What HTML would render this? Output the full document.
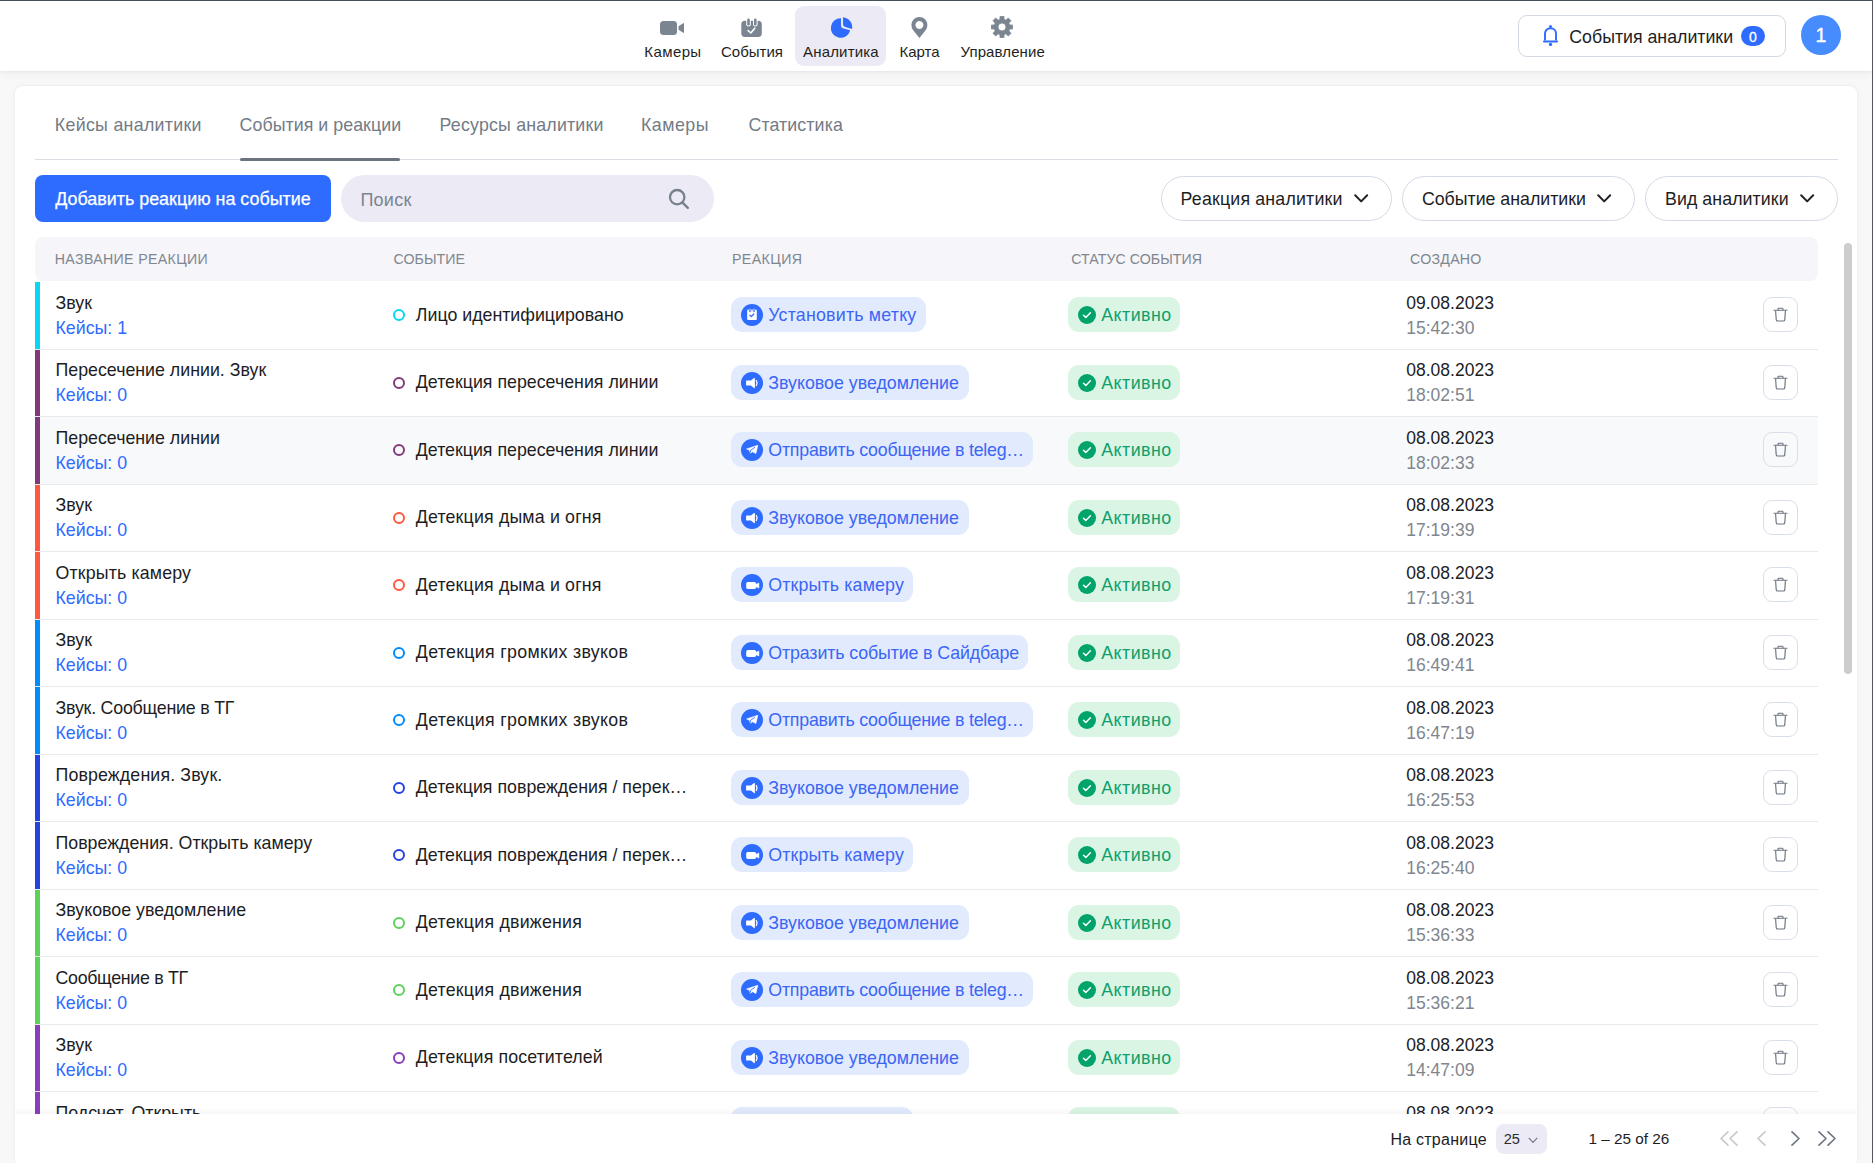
<!DOCTYPE html>
<html><head><meta charset="utf-8"><title>Analytics</title>
<style>
*{box-sizing:border-box;margin:0;padding:0}
html,body{width:1873px;height:1163px;overflow:hidden;background:#f6f6f7}
body{font-family:"Liberation Sans", sans-serif;position:relative}
</style></head><body>
<div style="position:absolute;left:0px;top:0px;width:1873px;height:1163px;background:#f8f8f8"></div>
<div style="position:absolute;left:15px;top:86px;width:1842px;height:1080px;background:#fff;border-radius:7px;box-shadow:0 0 1.5px rgba(0,0,0,0.10),0 0 8px rgba(0,0,0,0.035)"></div>
<div style="position:absolute;left:0px;top:0px;width:1873px;height:71px;background:#fff;box-shadow:0 1px 3px rgba(0,0,0,0.06),0 3px 10px rgba(0,0,0,0.035)"></div>
<div style="position:absolute;left:795px;top:6px;width:91px;height:60px;background:#ecebf5;border-radius:9px"></div>
<svg style="position:absolute;left:659px;top:20px;" width="26" height="16" viewBox="0 0 26 16"><rect x="1" y="1" width="17" height="14" rx="3.5" fill="#7b8591"/><path d="M19.5 6.2 L24.2 3.2 Q25 2.8 25 3.7 L25 12.3 Q25 13.2 24.2 12.8 L19.5 9.8 Z" fill="#7b8591"/></svg>
<svg style="position:absolute;left:740px;top:17px;" width="23" height="21" viewBox="0 0 23 21"><rect x="1.3" y="3.8" width="20.5" height="16.1" rx="3.6" fill="#7b8591"/><rect x="6.2" y="0.4" width="4.6" height="9.2" rx="2.3" fill="#fff"/><rect x="13" y="0.4" width="4.6" height="9.2" rx="2.3" fill="#fff"/><rect x="7.2" y="1.5" width="2.6" height="7" rx="1.3" fill="#7b8591"/><rect x="14" y="1.5" width="2.6" height="7" rx="1.3" fill="#7b8591"/><path d="M8 13.5 L10.8 16 L14.8 11.2" fill="none" stroke="#fff" stroke-width="1.6" stroke-linecap="round" stroke-linejoin="round"/></svg>
<svg style="position:absolute;left:831px;top:16px;" width="23" height="23" viewBox="0 0 23 23"><path d="M10 2.2 L10 9.8 Q10 11.6 11.8 12.2 L19.2 14.3 A9.8 9.8 0 1 1 10 2.2 Z" fill="#2e6bff"/><path d="M12 1.2 A10 10 0 0 1 21 12.9 L14.2 11 Q12 10.4 12 8.6 Z" fill="#2e6bff"/></svg>
<svg style="position:absolute;left:911px;top:16px;" width="17" height="23" viewBox="0 0 17 23"><path d="M8.4 1 A8 8 0 0 1 16.4 9 Q16.4 11.5 14.8 14 L8.4 22 L2 14 Q0.4 11.5 0.4 9 A8 8 0 0 1 8.4 1 Z M8.4 5 A4 4 0 1 0 8.41 5 Z" fill="#7b8591" fill-rule="evenodd"/></svg>
<svg style="position:absolute;left:991px;top:16px;" width="22" height="22" viewBox="0 0 22 22"><path d="M8.89 3.39 L9.14 0.16 L12.86 0.16 L13.11 3.39 L14.89 4.13 L17.35 2.02 L19.98 4.65 L17.87 7.11 L18.61 8.89 L21.84 9.14 L21.84 12.86 L18.61 13.11 L17.87 14.89 L19.98 17.35 L17.35 19.98 L14.89 17.87 L13.11 18.61 L12.86 21.84 L9.14 21.84 L8.89 18.61 L7.11 17.87 L4.65 19.98 L2.02 17.35 L4.13 14.89 L3.39 13.11 L0.16 12.86 L0.16 9.14 L3.39 8.89 L4.13 7.11 L2.02 4.65 L4.65 2.02 L7.11 4.13 Z M11 7 A4 4 0 1 0 11.01 7 Z" fill="#7b8591" fill-rule="evenodd" stroke="#7b8591" stroke-width="0.8" stroke-linejoin="round"/></svg>
<div style="position:absolute;left:644.30px;top:43.50px;font-size:15px;line-height:15px;color:#1f1f23;white-space:nowrap;letter-spacing:0.4px">Камеры</div>
<div style="position:absolute;left:721.00px;top:43.50px;font-size:15px;line-height:15px;color:#1f1f23;white-space:nowrap;letter-spacing:0.0px">События</div>
<div style="position:absolute;left:803.00px;top:43.50px;font-size:15px;line-height:15px;color:#1f1f23;white-space:nowrap;letter-spacing:0.18px">Аналитика</div>
<div style="position:absolute;left:899.50px;top:43.50px;font-size:15px;line-height:15px;color:#1f1f23;white-space:nowrap;letter-spacing:0.0px">Карта</div>
<div style="position:absolute;left:960.50px;top:43.50px;font-size:15px;line-height:15px;color:#1f1f23;white-space:nowrap;letter-spacing:0.1px">Управление</div>
<div style="position:absolute;left:1518px;top:15px;width:268px;height:42px;border:1px solid #d3d9e3;border-radius:9px;box-sizing:border-box"></div>
<svg style="position:absolute;left:1541px;top:25px;" width="19" height="22" viewBox="0 0 19 22"><path d="M4 15.6 L4 8.6 C4 5.5 6.4 3.3 9.5 3.3 C12.6 3.3 15 5.5 15 8.6 L15 15.6" fill="none" stroke="#2e6bff" stroke-width="1.9"/><path d="M2.9 16.5 L16.1 16.5" stroke="#2e6bff" stroke-width="1.9" stroke-linecap="round"/><circle cx="9.5" cy="1.6" r="1.5" fill="#2e6bff"/><circle cx="9.5" cy="19.4" r="1.7" fill="#2e6bff"/></svg>
<div style="position:absolute;left:1569.30px;top:28.67px;font-size:17.75px;line-height:17.75px;color:#1d1d1f;white-space:nowrap;">События аналитики</div>
<div style="position:absolute;left:1741px;top:26px;width:24px;height:20px;background:#2e6bff;border-radius:10px"></div>
<div style="position:absolute;left:1749.00px;top:29.55px;font-size:14px;line-height:14px;color:#fff;white-space:nowrap;-webkit-text-stroke:0.3px #fff">0</div>
<div style="position:absolute;left:1801px;top:15px;width:40px;height:40px;background:#468cff;border-radius:50%"></div>
<div style="position:absolute;left:1815.50px;top:26.39px;font-size:19.5px;line-height:19.5px;color:#fff;white-space:nowrap;-webkit-text-stroke:0.35px #fff">1</div>
<div style="position:absolute;left:54.80px;top:116.53px;font-size:17.8px;line-height:17.8px;color:#737b86;white-space:nowrap;letter-spacing:0.3px">Кейсы аналитики</div>
<div style="position:absolute;left:239.60px;top:116.53px;font-size:17.8px;line-height:17.8px;color:#737b86;white-space:nowrap;letter-spacing:0.05px">События и реакции</div>
<div style="position:absolute;left:439.60px;top:116.53px;font-size:17.8px;line-height:17.8px;color:#737b86;white-space:nowrap;letter-spacing:0.19px">Ресурсы аналитики</div>
<div style="position:absolute;left:641.00px;top:116.53px;font-size:17.8px;line-height:17.8px;color:#737b86;white-space:nowrap;letter-spacing:0.5px">Камеры</div>
<div style="position:absolute;left:748.50px;top:116.53px;font-size:17.8px;line-height:17.8px;color:#737b86;white-space:nowrap;letter-spacing:0.1px">Статистика</div>
<div style="position:absolute;left:35px;top:159px;width:1803px;height:1px;background:#d9dee5"></div>
<div style="position:absolute;left:240px;top:158px;width:160px;height:3px;background:#6b7480;border-radius:2px"></div>
<div style="position:absolute;left:35px;top:175px;width:296px;height:47px;background:#2e6bff;border-radius:8px"></div>
<div style="position:absolute;left:55.20px;top:190.85px;font-size:17.9px;line-height:17.9px;color:#fff;white-space:nowrap;-webkit-text-stroke:0.25px #fff">Добавить реакцию на событие</div>
<div style="position:absolute;left:341px;top:175px;width:373px;height:47px;background:#ecebf5;border-radius:24px"></div>
<div style="position:absolute;left:360.40px;top:190.66px;font-size:18px;line-height:18px;color:#7b8490;white-space:nowrap;letter-spacing:0.25px">Поиск</div>
<svg style="position:absolute;left:668px;top:188px;" width="22" height="22" viewBox="0 0 22 22"><circle cx="9.2" cy="9.2" r="7.2" fill="none" stroke="#77818b" stroke-width="2.3"/><path d="M14.6 14.6 L19.8 19.8" stroke="#77818b" stroke-width="2.4" stroke-linecap="round"/></svg>
<div style="position:absolute;left:1161px;top:176px;width:231px;height:45px;border:1px solid #d5dbe5;border-radius:23px"></div>
<div style="position:absolute;left:1180.60px;top:191.17px;font-size:17.75px;line-height:17.75px;color:#1d1d1f;white-space:nowrap;letter-spacing:0.19px">Реакция аналитики</div>
<svg style="position:absolute;left:1353.9px;top:194px;overflow:visible" width="14.4" height="9" viewBox="0 0 14.4 9"><path d="M1.2 1.2 L7.2 7.4 L13.2 1.2" fill="none" stroke="#1f2328" stroke-width="2" stroke-linecap="round" stroke-linejoin="round"/></svg>
<div style="position:absolute;left:1402px;top:176px;width:233px;height:45px;border:1px solid #d5dbe5;border-radius:23px"></div>
<div style="position:absolute;left:1421.90px;top:191.17px;font-size:17.75px;line-height:17.75px;color:#1d1d1f;white-space:nowrap;">Событие аналитики</div>
<svg style="position:absolute;left:1596.8px;top:194px;overflow:visible" width="14.4" height="9" viewBox="0 0 14.4 9"><path d="M1.2 1.2 L7.2 7.4 L13.2 1.2" fill="none" stroke="#1f2328" stroke-width="2" stroke-linecap="round" stroke-linejoin="round"/></svg>
<div style="position:absolute;left:1645px;top:176px;width:193px;height:45px;border:1px solid #d5dbe5;border-radius:23px"></div>
<div style="position:absolute;left:1665.00px;top:191.17px;font-size:17.75px;line-height:17.75px;color:#1d1d1f;white-space:nowrap;letter-spacing:0.08px">Вид аналитики</div>
<svg style="position:absolute;left:1799.9px;top:194px;overflow:visible" width="14.4" height="9" viewBox="0 0 14.4 9"><path d="M1.2 1.2 L7.2 7.4 L13.2 1.2" fill="none" stroke="#1f2328" stroke-width="2" stroke-linecap="round" stroke-linejoin="round"/></svg>
<div style="position:absolute;left:0;top:0;width:1873px;height:1114px;overflow:hidden">
<div style="position:absolute;left:35px;top:237px;width:1783px;height:44px;background:#f6f5fa;border-radius:8px"></div>
<div style="position:absolute;left:54.80px;top:251.88px;font-size:14.2px;line-height:14.2px;color:#80868e;white-space:nowrap;letter-spacing:0.33px">НАЗВАНИЕ РЕАКЦИИ</div>
<div style="position:absolute;left:393.60px;top:251.88px;font-size:14.2px;line-height:14.2px;color:#80868e;white-space:nowrap;letter-spacing:0.02px">СОБЫТИЕ</div>
<div style="position:absolute;left:732.00px;top:251.88px;font-size:14.2px;line-height:14.2px;color:#80868e;white-space:nowrap;letter-spacing:0.4px">РЕАКЦИЯ</div>
<div style="position:absolute;left:1071.20px;top:251.88px;font-size:14.2px;line-height:14.2px;color:#80868e;white-space:nowrap;letter-spacing:0.05px">СТАТУС СОБЫТИЯ</div>
<div style="position:absolute;left:1410.00px;top:251.88px;font-size:14.2px;line-height:14.2px;color:#80868e;white-space:nowrap;letter-spacing:0.25px">СОЗДАНО</div>
<div style="position:absolute;left:35px;top:348.5px;width:1783px;height:1.0px;background:#e9e9f0"></div>
<div style="position:absolute;left:35px;top:282.0px;width:5px;height:66.5px;background:#08d6f4"></div>
<div style="position:absolute;left:55.50px;top:294.73px;font-size:17.8px;line-height:17.8px;color:#1d1d1f;white-space:nowrap;">Звук</div>
<div style="position:absolute;left:55.50px;top:319.53px;font-size:17.8px;line-height:17.8px;color:#2e6bff;white-space:nowrap;">Кейсы: 1</div>
<div style="position:absolute;left:393px;top:309.0px;width:12px;height:12.0px;border:2px solid #08d6f4;border-radius:50%"></div>
<div style="position:absolute;left:415.80px;top:306.93px;font-size:17.8px;line-height:17.8px;color:#1d1d1f;white-space:nowrap;">Лицо идентифицировано</div>
<div style="position:absolute;left:731px;top:297.0px;width:194.60000000000002px;height:35.0px;background:#e2eafd;border-radius:11px"></div>
<svg style="position:absolute;left:741px;top:304.0px;" width="22" height="22" viewBox="0 0 22 22"><circle cx="11" cy="11" r="11" fill="#2e6bff"/><path d="M6.2 6.8 Q6.2 5.6 7.2 5.6 L8.3 5.6 L9.2 7.3 L10.1 5.6 L11.9 5.6 L12.8 7.3 L13.7 5.6 L14.8 5.6 Q15.8 5.6 15.8 6.8 L15.8 15.2 Q15.8 16 15 16 L7 16 Q6.2 16 6.2 15.2 Z" fill="#fff"/><rect x="8.3" y="4.6" width="1.6" height="3.2" rx="0.8" fill="#fff" stroke="#2e6bff" stroke-width="0.8"/><rect x="12.1" y="4.6" width="1.6" height="3.2" rx="0.8" fill="#fff" stroke="#2e6bff" stroke-width="0.8"/><path d="M8.9 11.3 L10.3 12.6 L12.8 10" fill="none" stroke="#2e6bff" stroke-width="1.3" stroke-linecap="round" stroke-linejoin="round"/></svg>
<div style="position:absolute;left:768.30px;top:307.23px;font-size:17.8px;line-height:17.8px;color:#3a66f5;white-space:nowrap;letter-spacing:0.21px">Установить метку</div>
<div style="position:absolute;left:1068px;top:297.0px;width:112px;height:35.0px;background:#daf5e4;border-radius:11px"></div>
<svg style="position:absolute;left:1078px;top:306.0px;" width="18" height="18" viewBox="0 0 18 18"><circle cx="9" cy="9" r="9" fill="#00a369"/><path d="M5.5 9.3 L7.8 11.4 L12.4 6.7" fill="none" stroke="#fff" stroke-width="1.5" stroke-linecap="round" stroke-linejoin="round"/></svg>
<div style="position:absolute;left:1101.20px;top:307.23px;font-size:17.8px;line-height:17.8px;color:#0e9f6c;white-space:nowrap;letter-spacing:0.5px">Активно</div>
<div style="position:absolute;left:1406.30px;top:294.69px;font-size:17.5px;line-height:17.5px;color:#1d1d1f;white-space:nowrap;">09.08.2023</div>
<div style="position:absolute;left:1406.30px;top:319.69px;font-size:17.5px;line-height:17.5px;color:#80868e;white-space:nowrap;">15:42:30</div>
<div style="position:absolute;left:1763px;top:297.0px;width:35px;height:35.0px;border:1px solid #d9dfe8;border-radius:9px"></div>
<svg style="position:absolute;left:1773px;top:307.0px;" width="15" height="15" viewBox="0 0 15 15"><path d="M1 3.3 L14 3.3" stroke="#6b7480" stroke-width="1.1" stroke-linecap="round"/><path d="M5 3.2 L5 1.9 Q5 1.2 5.7 1.2 L9.3 1.2 Q10 1.2 10 1.9 L10 3.2" fill="none" stroke="#6b7480" stroke-width="1.05"/><path d="M2.6 3.6 L3.2 12.6 Q3.3 14 4.7 14 L10.3 14 Q11.7 14 11.8 12.6 L12.4 3.6" fill="none" stroke="#6b7480" stroke-width="1.15"/></svg>
<div style="position:absolute;left:35px;top:416.0px;width:1783px;height:1.0px;background:#e9e9f0"></div>
<div style="position:absolute;left:35px;top:349.5px;width:5px;height:66.5px;background:#803a7a"></div>
<div style="position:absolute;left:55.50px;top:362.23px;font-size:17.8px;line-height:17.8px;color:#1d1d1f;white-space:nowrap;">Пересечение линии. Звук</div>
<div style="position:absolute;left:55.50px;top:387.03px;font-size:17.8px;line-height:17.8px;color:#2e6bff;white-space:nowrap;">Кейсы: 0</div>
<div style="position:absolute;left:393px;top:376.5px;width:12px;height:12.0px;border:2px solid #803a7a;border-radius:50%"></div>
<div style="position:absolute;left:415.80px;top:374.43px;font-size:17.8px;line-height:17.8px;color:#1d1d1f;white-space:nowrap;">Детекция пересечения линии</div>
<div style="position:absolute;left:731px;top:364.5px;width:237.79999999999995px;height:35.0px;background:#e2eafd;border-radius:11px"></div>
<svg style="position:absolute;left:741px;top:371.5px;" width="22" height="22" viewBox="0 0 22 22"><circle cx="11" cy="11" r="11" fill="#2e6bff"/><path d="M5.4 8.5 L9.9 8.5 L13 6.1 Q13.9 5.5 13.9 6.5 L13.9 15.5 Q13.9 16.5 13 15.9 L9.9 13.5 L5.4 13.5 Q5.1 13.5 5.1 13.1 L5.1 8.9 Q5.1 8.5 5.4 8.5 Z" fill="#fff"/><path d="M15.3 8.6 Q16.9 11 15.3 13.5" fill="none" stroke="#fff" stroke-width="1.3" stroke-linecap="round"/></svg>
<div style="position:absolute;left:768.30px;top:374.73px;font-size:17.8px;line-height:17.8px;color:#3a66f5;white-space:nowrap;">Звуковое уведомление</div>
<div style="position:absolute;left:1068px;top:364.5px;width:112px;height:35.0px;background:#daf5e4;border-radius:11px"></div>
<svg style="position:absolute;left:1078px;top:373.5px;" width="18" height="18" viewBox="0 0 18 18"><circle cx="9" cy="9" r="9" fill="#00a369"/><path d="M5.5 9.3 L7.8 11.4 L12.4 6.7" fill="none" stroke="#fff" stroke-width="1.5" stroke-linecap="round" stroke-linejoin="round"/></svg>
<div style="position:absolute;left:1101.20px;top:374.73px;font-size:17.8px;line-height:17.8px;color:#0e9f6c;white-space:nowrap;letter-spacing:0.5px">Активно</div>
<div style="position:absolute;left:1406.30px;top:362.19px;font-size:17.5px;line-height:17.5px;color:#1d1d1f;white-space:nowrap;">08.08.2023</div>
<div style="position:absolute;left:1406.30px;top:387.19px;font-size:17.5px;line-height:17.5px;color:#80868e;white-space:nowrap;">18:02:51</div>
<div style="position:absolute;left:1763px;top:364.5px;width:35px;height:35.0px;border:1px solid #d9dfe8;border-radius:9px"></div>
<svg style="position:absolute;left:1773px;top:374.5px;" width="15" height="15" viewBox="0 0 15 15"><path d="M1 3.3 L14 3.3" stroke="#6b7480" stroke-width="1.1" stroke-linecap="round"/><path d="M5 3.2 L5 1.9 Q5 1.2 5.7 1.2 L9.3 1.2 Q10 1.2 10 1.9 L10 3.2" fill="none" stroke="#6b7480" stroke-width="1.05"/><path d="M2.6 3.6 L3.2 12.6 Q3.3 14 4.7 14 L10.3 14 Q11.7 14 11.8 12.6 L12.4 3.6" fill="none" stroke="#6b7480" stroke-width="1.15"/></svg>
<div style="position:absolute;left:35px;top:417.0px;width:1783px;height:67.5px;background:#f8f9fb"></div>
<div style="position:absolute;left:35px;top:483.5px;width:1783px;height:1.0px;background:#e9e9f0"></div>
<div style="position:absolute;left:35px;top:417.0px;width:5px;height:66.5px;background:#803a7a"></div>
<div style="position:absolute;left:55.50px;top:429.73px;font-size:17.8px;line-height:17.8px;color:#1d1d1f;white-space:nowrap;">Пересечение линии</div>
<div style="position:absolute;left:55.50px;top:454.53px;font-size:17.8px;line-height:17.8px;color:#2e6bff;white-space:nowrap;">Кейсы: 0</div>
<div style="position:absolute;left:393px;top:444.0px;width:12px;height:12.0px;border:2px solid #803a7a;border-radius:50%"></div>
<div style="position:absolute;left:415.80px;top:441.93px;font-size:17.8px;line-height:17.8px;color:#1d1d1f;white-space:nowrap;">Детекция пересечения линии</div>
<div style="position:absolute;left:731px;top:432.0px;width:301.9000000000001px;height:35.0px;background:#e2eafd;border-radius:11px"></div>
<svg style="position:absolute;left:741px;top:439.0px;" width="22" height="22" viewBox="0 0 22 22"><circle cx="11" cy="11" r="11" fill="#2e6bff"/><path d="M5.6 9.9 L16.8 6.3 L14.9 14.5 L11.6 12.8 L9.4 14.2 L8.4 11.3 Z" fill="#fff" stroke="#fff" stroke-width="0.6" stroke-linejoin="round"/><path d="M9.4 13.2 L9.6 11.3 L13.6 8.5" fill="none" stroke="#2e6bff" stroke-width="0.9" stroke-linecap="round"/></svg>
<div style="position:absolute;left:768.30px;top:442.23px;font-size:17.8px;line-height:17.8px;color:#3a66f5;white-space:nowrap;letter-spacing:-0.22px">Отправить сообщение в teleg…</div>
<div style="position:absolute;left:1068px;top:432.0px;width:112px;height:35.0px;background:#daf5e4;border-radius:11px"></div>
<svg style="position:absolute;left:1078px;top:441.0px;" width="18" height="18" viewBox="0 0 18 18"><circle cx="9" cy="9" r="9" fill="#00a369"/><path d="M5.5 9.3 L7.8 11.4 L12.4 6.7" fill="none" stroke="#fff" stroke-width="1.5" stroke-linecap="round" stroke-linejoin="round"/></svg>
<div style="position:absolute;left:1101.20px;top:442.23px;font-size:17.8px;line-height:17.8px;color:#0e9f6c;white-space:nowrap;letter-spacing:0.5px">Активно</div>
<div style="position:absolute;left:1406.30px;top:429.69px;font-size:17.5px;line-height:17.5px;color:#1d1d1f;white-space:nowrap;">08.08.2023</div>
<div style="position:absolute;left:1406.30px;top:454.69px;font-size:17.5px;line-height:17.5px;color:#80868e;white-space:nowrap;">18:02:33</div>
<div style="position:absolute;left:1763px;top:432.0px;width:35px;height:35.0px;border:1px solid #d9dfe8;border-radius:9px"></div>
<svg style="position:absolute;left:1773px;top:442.0px;" width="15" height="15" viewBox="0 0 15 15"><path d="M1 3.3 L14 3.3" stroke="#6b7480" stroke-width="1.1" stroke-linecap="round"/><path d="M5 3.2 L5 1.9 Q5 1.2 5.7 1.2 L9.3 1.2 Q10 1.2 10 1.9 L10 3.2" fill="none" stroke="#6b7480" stroke-width="1.05"/><path d="M2.6 3.6 L3.2 12.6 Q3.3 14 4.7 14 L10.3 14 Q11.7 14 11.8 12.6 L12.4 3.6" fill="none" stroke="#6b7480" stroke-width="1.15"/></svg>
<div style="position:absolute;left:35px;top:551.0px;width:1783px;height:1.0px;background:#e9e9f0"></div>
<div style="position:absolute;left:35px;top:484.5px;width:5px;height:66.5px;background:#ff583f"></div>
<div style="position:absolute;left:55.50px;top:497.23px;font-size:17.8px;line-height:17.8px;color:#1d1d1f;white-space:nowrap;">Звук</div>
<div style="position:absolute;left:55.50px;top:522.03px;font-size:17.8px;line-height:17.8px;color:#2e6bff;white-space:nowrap;">Кейсы: 0</div>
<div style="position:absolute;left:393px;top:511.5px;width:12px;height:12.0px;border:2px solid #ff583f;border-radius:50%"></div>
<div style="position:absolute;left:415.80px;top:509.43px;font-size:17.8px;line-height:17.8px;color:#1d1d1f;white-space:nowrap;letter-spacing:0.16px">Детекция дыма и огня</div>
<div style="position:absolute;left:731px;top:499.5px;width:237.79999999999995px;height:35.0px;background:#e2eafd;border-radius:11px"></div>
<svg style="position:absolute;left:741px;top:506.5px;" width="22" height="22" viewBox="0 0 22 22"><circle cx="11" cy="11" r="11" fill="#2e6bff"/><path d="M5.4 8.5 L9.9 8.5 L13 6.1 Q13.9 5.5 13.9 6.5 L13.9 15.5 Q13.9 16.5 13 15.9 L9.9 13.5 L5.4 13.5 Q5.1 13.5 5.1 13.1 L5.1 8.9 Q5.1 8.5 5.4 8.5 Z" fill="#fff"/><path d="M15.3 8.6 Q16.9 11 15.3 13.5" fill="none" stroke="#fff" stroke-width="1.3" stroke-linecap="round"/></svg>
<div style="position:absolute;left:768.30px;top:509.73px;font-size:17.8px;line-height:17.8px;color:#3a66f5;white-space:nowrap;">Звуковое уведомление</div>
<div style="position:absolute;left:1068px;top:499.5px;width:112px;height:35.0px;background:#daf5e4;border-radius:11px"></div>
<svg style="position:absolute;left:1078px;top:508.5px;" width="18" height="18" viewBox="0 0 18 18"><circle cx="9" cy="9" r="9" fill="#00a369"/><path d="M5.5 9.3 L7.8 11.4 L12.4 6.7" fill="none" stroke="#fff" stroke-width="1.5" stroke-linecap="round" stroke-linejoin="round"/></svg>
<div style="position:absolute;left:1101.20px;top:509.73px;font-size:17.8px;line-height:17.8px;color:#0e9f6c;white-space:nowrap;letter-spacing:0.5px">Активно</div>
<div style="position:absolute;left:1406.30px;top:497.19px;font-size:17.5px;line-height:17.5px;color:#1d1d1f;white-space:nowrap;">08.08.2023</div>
<div style="position:absolute;left:1406.30px;top:522.19px;font-size:17.5px;line-height:17.5px;color:#80868e;white-space:nowrap;">17:19:39</div>
<div style="position:absolute;left:1763px;top:499.5px;width:35px;height:35.0px;border:1px solid #d9dfe8;border-radius:9px"></div>
<svg style="position:absolute;left:1773px;top:509.5px;" width="15" height="15" viewBox="0 0 15 15"><path d="M1 3.3 L14 3.3" stroke="#6b7480" stroke-width="1.1" stroke-linecap="round"/><path d="M5 3.2 L5 1.9 Q5 1.2 5.7 1.2 L9.3 1.2 Q10 1.2 10 1.9 L10 3.2" fill="none" stroke="#6b7480" stroke-width="1.05"/><path d="M2.6 3.6 L3.2 12.6 Q3.3 14 4.7 14 L10.3 14 Q11.7 14 11.8 12.6 L12.4 3.6" fill="none" stroke="#6b7480" stroke-width="1.15"/></svg>
<div style="position:absolute;left:35px;top:618.5px;width:1783px;height:1.0px;background:#e9e9f0"></div>
<div style="position:absolute;left:35px;top:552.0px;width:5px;height:66.5px;background:#ff583f"></div>
<div style="position:absolute;left:55.50px;top:564.73px;font-size:17.8px;line-height:17.8px;color:#1d1d1f;white-space:nowrap;letter-spacing:0.15px">Открыть камеру</div>
<div style="position:absolute;left:55.50px;top:589.53px;font-size:17.8px;line-height:17.8px;color:#2e6bff;white-space:nowrap;">Кейсы: 0</div>
<div style="position:absolute;left:393px;top:579.0px;width:12px;height:12.0px;border:2px solid #ff583f;border-radius:50%"></div>
<div style="position:absolute;left:415.80px;top:576.93px;font-size:17.8px;line-height:17.8px;color:#1d1d1f;white-space:nowrap;letter-spacing:0.16px">Детекция дыма и огня</div>
<div style="position:absolute;left:731px;top:567.0px;width:181.70000000000005px;height:35.0px;background:#e2eafd;border-radius:11px"></div>
<svg style="position:absolute;left:741px;top:574.0px;" width="22" height="22" viewBox="0 0 22 22"><circle cx="11" cy="11" r="11" fill="#2e6bff"/><rect x="5.2" y="8" width="9.9" height="7" rx="1.7" fill="#fff"/><path d="M14.6 10.4 L17.9 9 L17.9 14 L14.6 12.6 Z" fill="#fff" stroke="#fff" stroke-width="0.5" stroke-linejoin="round"/></svg>
<div style="position:absolute;left:768.30px;top:577.23px;font-size:17.8px;line-height:17.8px;color:#3a66f5;white-space:nowrap;letter-spacing:0.15px">Открыть камеру</div>
<div style="position:absolute;left:1068px;top:567.0px;width:112px;height:35.0px;background:#daf5e4;border-radius:11px"></div>
<svg style="position:absolute;left:1078px;top:576.0px;" width="18" height="18" viewBox="0 0 18 18"><circle cx="9" cy="9" r="9" fill="#00a369"/><path d="M5.5 9.3 L7.8 11.4 L12.4 6.7" fill="none" stroke="#fff" stroke-width="1.5" stroke-linecap="round" stroke-linejoin="round"/></svg>
<div style="position:absolute;left:1101.20px;top:577.23px;font-size:17.8px;line-height:17.8px;color:#0e9f6c;white-space:nowrap;letter-spacing:0.5px">Активно</div>
<div style="position:absolute;left:1406.30px;top:564.69px;font-size:17.5px;line-height:17.5px;color:#1d1d1f;white-space:nowrap;">08.08.2023</div>
<div style="position:absolute;left:1406.30px;top:589.69px;font-size:17.5px;line-height:17.5px;color:#80868e;white-space:nowrap;">17:19:31</div>
<div style="position:absolute;left:1763px;top:567.0px;width:35px;height:35.0px;border:1px solid #d9dfe8;border-radius:9px"></div>
<svg style="position:absolute;left:1773px;top:577.0px;" width="15" height="15" viewBox="0 0 15 15"><path d="M1 3.3 L14 3.3" stroke="#6b7480" stroke-width="1.1" stroke-linecap="round"/><path d="M5 3.2 L5 1.9 Q5 1.2 5.7 1.2 L9.3 1.2 Q10 1.2 10 1.9 L10 3.2" fill="none" stroke="#6b7480" stroke-width="1.05"/><path d="M2.6 3.6 L3.2 12.6 Q3.3 14 4.7 14 L10.3 14 Q11.7 14 11.8 12.6 L12.4 3.6" fill="none" stroke="#6b7480" stroke-width="1.15"/></svg>
<div style="position:absolute;left:35px;top:686.0px;width:1783px;height:1.0px;background:#e9e9f0"></div>
<div style="position:absolute;left:35px;top:619.5px;width:5px;height:66.5px;background:#008cff"></div>
<div style="position:absolute;left:55.50px;top:632.23px;font-size:17.8px;line-height:17.8px;color:#1d1d1f;white-space:nowrap;">Звук</div>
<div style="position:absolute;left:55.50px;top:657.03px;font-size:17.8px;line-height:17.8px;color:#2e6bff;white-space:nowrap;">Кейсы: 0</div>
<div style="position:absolute;left:393px;top:646.5px;width:12px;height:12.0px;border:2px solid #008cff;border-radius:50%"></div>
<div style="position:absolute;left:415.80px;top:644.43px;font-size:17.8px;line-height:17.8px;color:#1d1d1f;white-space:nowrap;letter-spacing:0.32px">Детекция громких звуков</div>
<div style="position:absolute;left:731px;top:634.5px;width:296.79999999999995px;height:35.0px;background:#e2eafd;border-radius:11px"></div>
<svg style="position:absolute;left:741px;top:641.5px;" width="22" height="22" viewBox="0 0 22 22"><circle cx="11" cy="11" r="11" fill="#2e6bff"/><rect x="5.2" y="8" width="9.9" height="7" rx="1.7" fill="#fff"/><path d="M14.6 10.4 L17.9 9 L17.9 14 L14.6 12.6 Z" fill="#fff" stroke="#fff" stroke-width="0.5" stroke-linejoin="round"/></svg>
<div style="position:absolute;left:768.30px;top:644.73px;font-size:17.8px;line-height:17.8px;color:#3a66f5;white-space:nowrap;letter-spacing:-0.12px">Отразить событие в Сайдбаре</div>
<div style="position:absolute;left:1068px;top:634.5px;width:112px;height:35.0px;background:#daf5e4;border-radius:11px"></div>
<svg style="position:absolute;left:1078px;top:643.5px;" width="18" height="18" viewBox="0 0 18 18"><circle cx="9" cy="9" r="9" fill="#00a369"/><path d="M5.5 9.3 L7.8 11.4 L12.4 6.7" fill="none" stroke="#fff" stroke-width="1.5" stroke-linecap="round" stroke-linejoin="round"/></svg>
<div style="position:absolute;left:1101.20px;top:644.73px;font-size:17.8px;line-height:17.8px;color:#0e9f6c;white-space:nowrap;letter-spacing:0.5px">Активно</div>
<div style="position:absolute;left:1406.30px;top:632.19px;font-size:17.5px;line-height:17.5px;color:#1d1d1f;white-space:nowrap;">08.08.2023</div>
<div style="position:absolute;left:1406.30px;top:657.19px;font-size:17.5px;line-height:17.5px;color:#80868e;white-space:nowrap;">16:49:41</div>
<div style="position:absolute;left:1763px;top:634.5px;width:35px;height:35.0px;border:1px solid #d9dfe8;border-radius:9px"></div>
<svg style="position:absolute;left:1773px;top:644.5px;" width="15" height="15" viewBox="0 0 15 15"><path d="M1 3.3 L14 3.3" stroke="#6b7480" stroke-width="1.1" stroke-linecap="round"/><path d="M5 3.2 L5 1.9 Q5 1.2 5.7 1.2 L9.3 1.2 Q10 1.2 10 1.9 L10 3.2" fill="none" stroke="#6b7480" stroke-width="1.05"/><path d="M2.6 3.6 L3.2 12.6 Q3.3 14 4.7 14 L10.3 14 Q11.7 14 11.8 12.6 L12.4 3.6" fill="none" stroke="#6b7480" stroke-width="1.15"/></svg>
<div style="position:absolute;left:35px;top:753.5px;width:1783px;height:1.0px;background:#e9e9f0"></div>
<div style="position:absolute;left:35px;top:687.0px;width:5px;height:66.5px;background:#008cff"></div>
<div style="position:absolute;left:55.50px;top:699.73px;font-size:17.8px;line-height:17.8px;color:#1d1d1f;white-space:nowrap;letter-spacing:-0.21px">Звук. Сообщение в ТГ</div>
<div style="position:absolute;left:55.50px;top:724.53px;font-size:17.8px;line-height:17.8px;color:#2e6bff;white-space:nowrap;">Кейсы: 0</div>
<div style="position:absolute;left:393px;top:714.0px;width:12px;height:12.0px;border:2px solid #008cff;border-radius:50%"></div>
<div style="position:absolute;left:415.80px;top:711.93px;font-size:17.8px;line-height:17.8px;color:#1d1d1f;white-space:nowrap;letter-spacing:0.32px">Детекция громких звуков</div>
<div style="position:absolute;left:731px;top:702.0px;width:301.9000000000001px;height:35.0px;background:#e2eafd;border-radius:11px"></div>
<svg style="position:absolute;left:741px;top:709.0px;" width="22" height="22" viewBox="0 0 22 22"><circle cx="11" cy="11" r="11" fill="#2e6bff"/><path d="M5.6 9.9 L16.8 6.3 L14.9 14.5 L11.6 12.8 L9.4 14.2 L8.4 11.3 Z" fill="#fff" stroke="#fff" stroke-width="0.6" stroke-linejoin="round"/><path d="M9.4 13.2 L9.6 11.3 L13.6 8.5" fill="none" stroke="#2e6bff" stroke-width="0.9" stroke-linecap="round"/></svg>
<div style="position:absolute;left:768.30px;top:712.23px;font-size:17.8px;line-height:17.8px;color:#3a66f5;white-space:nowrap;letter-spacing:-0.22px">Отправить сообщение в teleg…</div>
<div style="position:absolute;left:1068px;top:702.0px;width:112px;height:35.0px;background:#daf5e4;border-radius:11px"></div>
<svg style="position:absolute;left:1078px;top:711.0px;" width="18" height="18" viewBox="0 0 18 18"><circle cx="9" cy="9" r="9" fill="#00a369"/><path d="M5.5 9.3 L7.8 11.4 L12.4 6.7" fill="none" stroke="#fff" stroke-width="1.5" stroke-linecap="round" stroke-linejoin="round"/></svg>
<div style="position:absolute;left:1101.20px;top:712.23px;font-size:17.8px;line-height:17.8px;color:#0e9f6c;white-space:nowrap;letter-spacing:0.5px">Активно</div>
<div style="position:absolute;left:1406.30px;top:699.69px;font-size:17.5px;line-height:17.5px;color:#1d1d1f;white-space:nowrap;">08.08.2023</div>
<div style="position:absolute;left:1406.30px;top:724.69px;font-size:17.5px;line-height:17.5px;color:#80868e;white-space:nowrap;">16:47:19</div>
<div style="position:absolute;left:1763px;top:702.0px;width:35px;height:35.0px;border:1px solid #d9dfe8;border-radius:9px"></div>
<svg style="position:absolute;left:1773px;top:712.0px;" width="15" height="15" viewBox="0 0 15 15"><path d="M1 3.3 L14 3.3" stroke="#6b7480" stroke-width="1.1" stroke-linecap="round"/><path d="M5 3.2 L5 1.9 Q5 1.2 5.7 1.2 L9.3 1.2 Q10 1.2 10 1.9 L10 3.2" fill="none" stroke="#6b7480" stroke-width="1.05"/><path d="M2.6 3.6 L3.2 12.6 Q3.3 14 4.7 14 L10.3 14 Q11.7 14 11.8 12.6 L12.4 3.6" fill="none" stroke="#6b7480" stroke-width="1.15"/></svg>
<div style="position:absolute;left:35px;top:821.0px;width:1783px;height:1.0px;background:#e9e9f0"></div>
<div style="position:absolute;left:35px;top:754.5px;width:5px;height:66.5px;background:#2543dd"></div>
<div style="position:absolute;left:55.50px;top:767.23px;font-size:17.8px;line-height:17.8px;color:#1d1d1f;white-space:nowrap;letter-spacing:0.13px">Повреждения. Звук.</div>
<div style="position:absolute;left:55.50px;top:792.03px;font-size:17.8px;line-height:17.8px;color:#2e6bff;white-space:nowrap;">Кейсы: 0</div>
<div style="position:absolute;left:393px;top:781.5px;width:12px;height:12.0px;border:2px solid #2543dd;border-radius:50%"></div>
<div style="position:absolute;left:415.80px;top:779.43px;font-size:17.8px;line-height:17.8px;color:#1d1d1f;white-space:nowrap;">Детекция повреждения / перек…</div>
<div style="position:absolute;left:731px;top:769.5px;width:237.79999999999995px;height:35.0px;background:#e2eafd;border-radius:11px"></div>
<svg style="position:absolute;left:741px;top:776.5px;" width="22" height="22" viewBox="0 0 22 22"><circle cx="11" cy="11" r="11" fill="#2e6bff"/><path d="M5.4 8.5 L9.9 8.5 L13 6.1 Q13.9 5.5 13.9 6.5 L13.9 15.5 Q13.9 16.5 13 15.9 L9.9 13.5 L5.4 13.5 Q5.1 13.5 5.1 13.1 L5.1 8.9 Q5.1 8.5 5.4 8.5 Z" fill="#fff"/><path d="M15.3 8.6 Q16.9 11 15.3 13.5" fill="none" stroke="#fff" stroke-width="1.3" stroke-linecap="round"/></svg>
<div style="position:absolute;left:768.30px;top:779.73px;font-size:17.8px;line-height:17.8px;color:#3a66f5;white-space:nowrap;">Звуковое уведомление</div>
<div style="position:absolute;left:1068px;top:769.5px;width:112px;height:35.0px;background:#daf5e4;border-radius:11px"></div>
<svg style="position:absolute;left:1078px;top:778.5px;" width="18" height="18" viewBox="0 0 18 18"><circle cx="9" cy="9" r="9" fill="#00a369"/><path d="M5.5 9.3 L7.8 11.4 L12.4 6.7" fill="none" stroke="#fff" stroke-width="1.5" stroke-linecap="round" stroke-linejoin="round"/></svg>
<div style="position:absolute;left:1101.20px;top:779.73px;font-size:17.8px;line-height:17.8px;color:#0e9f6c;white-space:nowrap;letter-spacing:0.5px">Активно</div>
<div style="position:absolute;left:1406.30px;top:767.19px;font-size:17.5px;line-height:17.5px;color:#1d1d1f;white-space:nowrap;">08.08.2023</div>
<div style="position:absolute;left:1406.30px;top:792.19px;font-size:17.5px;line-height:17.5px;color:#80868e;white-space:nowrap;">16:25:53</div>
<div style="position:absolute;left:1763px;top:769.5px;width:35px;height:35.0px;border:1px solid #d9dfe8;border-radius:9px"></div>
<svg style="position:absolute;left:1773px;top:779.5px;" width="15" height="15" viewBox="0 0 15 15"><path d="M1 3.3 L14 3.3" stroke="#6b7480" stroke-width="1.1" stroke-linecap="round"/><path d="M5 3.2 L5 1.9 Q5 1.2 5.7 1.2 L9.3 1.2 Q10 1.2 10 1.9 L10 3.2" fill="none" stroke="#6b7480" stroke-width="1.05"/><path d="M2.6 3.6 L3.2 12.6 Q3.3 14 4.7 14 L10.3 14 Q11.7 14 11.8 12.6 L12.4 3.6" fill="none" stroke="#6b7480" stroke-width="1.15"/></svg>
<div style="position:absolute;left:35px;top:888.5px;width:1783px;height:1.0px;background:#e9e9f0"></div>
<div style="position:absolute;left:35px;top:822.0px;width:5px;height:66.5px;background:#2543dd"></div>
<div style="position:absolute;left:55.50px;top:834.73px;font-size:17.8px;line-height:17.8px;color:#1d1d1f;white-space:nowrap;">Повреждения. Открыть камеру</div>
<div style="position:absolute;left:55.50px;top:859.53px;font-size:17.8px;line-height:17.8px;color:#2e6bff;white-space:nowrap;">Кейсы: 0</div>
<div style="position:absolute;left:393px;top:849.0px;width:12px;height:12.0px;border:2px solid #2543dd;border-radius:50%"></div>
<div style="position:absolute;left:415.80px;top:846.93px;font-size:17.8px;line-height:17.8px;color:#1d1d1f;white-space:nowrap;">Детекция повреждения / перек…</div>
<div style="position:absolute;left:731px;top:837.0px;width:181.70000000000005px;height:35.0px;background:#e2eafd;border-radius:11px"></div>
<svg style="position:absolute;left:741px;top:844.0px;" width="22" height="22" viewBox="0 0 22 22"><circle cx="11" cy="11" r="11" fill="#2e6bff"/><rect x="5.2" y="8" width="9.9" height="7" rx="1.7" fill="#fff"/><path d="M14.6 10.4 L17.9 9 L17.9 14 L14.6 12.6 Z" fill="#fff" stroke="#fff" stroke-width="0.5" stroke-linejoin="round"/></svg>
<div style="position:absolute;left:768.30px;top:847.23px;font-size:17.8px;line-height:17.8px;color:#3a66f5;white-space:nowrap;letter-spacing:0.15px">Открыть камеру</div>
<div style="position:absolute;left:1068px;top:837.0px;width:112px;height:35.0px;background:#daf5e4;border-radius:11px"></div>
<svg style="position:absolute;left:1078px;top:846.0px;" width="18" height="18" viewBox="0 0 18 18"><circle cx="9" cy="9" r="9" fill="#00a369"/><path d="M5.5 9.3 L7.8 11.4 L12.4 6.7" fill="none" stroke="#fff" stroke-width="1.5" stroke-linecap="round" stroke-linejoin="round"/></svg>
<div style="position:absolute;left:1101.20px;top:847.23px;font-size:17.8px;line-height:17.8px;color:#0e9f6c;white-space:nowrap;letter-spacing:0.5px">Активно</div>
<div style="position:absolute;left:1406.30px;top:834.69px;font-size:17.5px;line-height:17.5px;color:#1d1d1f;white-space:nowrap;">08.08.2023</div>
<div style="position:absolute;left:1406.30px;top:859.69px;font-size:17.5px;line-height:17.5px;color:#80868e;white-space:nowrap;">16:25:40</div>
<div style="position:absolute;left:1763px;top:837.0px;width:35px;height:35.0px;border:1px solid #d9dfe8;border-radius:9px"></div>
<svg style="position:absolute;left:1773px;top:847.0px;" width="15" height="15" viewBox="0 0 15 15"><path d="M1 3.3 L14 3.3" stroke="#6b7480" stroke-width="1.1" stroke-linecap="round"/><path d="M5 3.2 L5 1.9 Q5 1.2 5.7 1.2 L9.3 1.2 Q10 1.2 10 1.9 L10 3.2" fill="none" stroke="#6b7480" stroke-width="1.05"/><path d="M2.6 3.6 L3.2 12.6 Q3.3 14 4.7 14 L10.3 14 Q11.7 14 11.8 12.6 L12.4 3.6" fill="none" stroke="#6b7480" stroke-width="1.15"/></svg>
<div style="position:absolute;left:35px;top:956.0px;width:1783px;height:1.0px;background:#e9e9f0"></div>
<div style="position:absolute;left:35px;top:889.5px;width:5px;height:66.5px;background:#5cd25a"></div>
<div style="position:absolute;left:55.50px;top:902.23px;font-size:17.8px;line-height:17.8px;color:#1d1d1f;white-space:nowrap;">Звуковое уведомление</div>
<div style="position:absolute;left:55.50px;top:927.03px;font-size:17.8px;line-height:17.8px;color:#2e6bff;white-space:nowrap;">Кейсы: 0</div>
<div style="position:absolute;left:393px;top:916.5px;width:12px;height:12.0px;border:2px solid #5cd25a;border-radius:50%"></div>
<div style="position:absolute;left:415.80px;top:914.43px;font-size:17.8px;line-height:17.8px;color:#1d1d1f;white-space:nowrap;letter-spacing:0.22px">Детекция движения</div>
<div style="position:absolute;left:731px;top:904.5px;width:237.79999999999995px;height:35.0px;background:#e2eafd;border-radius:11px"></div>
<svg style="position:absolute;left:741px;top:911.5px;" width="22" height="22" viewBox="0 0 22 22"><circle cx="11" cy="11" r="11" fill="#2e6bff"/><path d="M5.4 8.5 L9.9 8.5 L13 6.1 Q13.9 5.5 13.9 6.5 L13.9 15.5 Q13.9 16.5 13 15.9 L9.9 13.5 L5.4 13.5 Q5.1 13.5 5.1 13.1 L5.1 8.9 Q5.1 8.5 5.4 8.5 Z" fill="#fff"/><path d="M15.3 8.6 Q16.9 11 15.3 13.5" fill="none" stroke="#fff" stroke-width="1.3" stroke-linecap="round"/></svg>
<div style="position:absolute;left:768.30px;top:914.73px;font-size:17.8px;line-height:17.8px;color:#3a66f5;white-space:nowrap;">Звуковое уведомление</div>
<div style="position:absolute;left:1068px;top:904.5px;width:112px;height:35.0px;background:#daf5e4;border-radius:11px"></div>
<svg style="position:absolute;left:1078px;top:913.5px;" width="18" height="18" viewBox="0 0 18 18"><circle cx="9" cy="9" r="9" fill="#00a369"/><path d="M5.5 9.3 L7.8 11.4 L12.4 6.7" fill="none" stroke="#fff" stroke-width="1.5" stroke-linecap="round" stroke-linejoin="round"/></svg>
<div style="position:absolute;left:1101.20px;top:914.73px;font-size:17.8px;line-height:17.8px;color:#0e9f6c;white-space:nowrap;letter-spacing:0.5px">Активно</div>
<div style="position:absolute;left:1406.30px;top:902.19px;font-size:17.5px;line-height:17.5px;color:#1d1d1f;white-space:nowrap;">08.08.2023</div>
<div style="position:absolute;left:1406.30px;top:927.19px;font-size:17.5px;line-height:17.5px;color:#80868e;white-space:nowrap;">15:36:33</div>
<div style="position:absolute;left:1763px;top:904.5px;width:35px;height:35.0px;border:1px solid #d9dfe8;border-radius:9px"></div>
<svg style="position:absolute;left:1773px;top:914.5px;" width="15" height="15" viewBox="0 0 15 15"><path d="M1 3.3 L14 3.3" stroke="#6b7480" stroke-width="1.1" stroke-linecap="round"/><path d="M5 3.2 L5 1.9 Q5 1.2 5.7 1.2 L9.3 1.2 Q10 1.2 10 1.9 L10 3.2" fill="none" stroke="#6b7480" stroke-width="1.05"/><path d="M2.6 3.6 L3.2 12.6 Q3.3 14 4.7 14 L10.3 14 Q11.7 14 11.8 12.6 L12.4 3.6" fill="none" stroke="#6b7480" stroke-width="1.15"/></svg>
<div style="position:absolute;left:35px;top:1023.5px;width:1783px;height:1.0px;background:#e9e9f0"></div>
<div style="position:absolute;left:35px;top:957.0px;width:5px;height:66.5px;background:#5cd25a"></div>
<div style="position:absolute;left:55.50px;top:969.73px;font-size:17.8px;line-height:17.8px;color:#1d1d1f;white-space:nowrap;letter-spacing:-0.3px">Сообщение в ТГ</div>
<div style="position:absolute;left:55.50px;top:994.53px;font-size:17.8px;line-height:17.8px;color:#2e6bff;white-space:nowrap;">Кейсы: 0</div>
<div style="position:absolute;left:393px;top:984.0px;width:12px;height:12.0px;border:2px solid #5cd25a;border-radius:50%"></div>
<div style="position:absolute;left:415.80px;top:981.93px;font-size:17.8px;line-height:17.8px;color:#1d1d1f;white-space:nowrap;letter-spacing:0.22px">Детекция движения</div>
<div style="position:absolute;left:731px;top:972.0px;width:301.9000000000001px;height:35.0px;background:#e2eafd;border-radius:11px"></div>
<svg style="position:absolute;left:741px;top:979.0px;" width="22" height="22" viewBox="0 0 22 22"><circle cx="11" cy="11" r="11" fill="#2e6bff"/><path d="M5.6 9.9 L16.8 6.3 L14.9 14.5 L11.6 12.8 L9.4 14.2 L8.4 11.3 Z" fill="#fff" stroke="#fff" stroke-width="0.6" stroke-linejoin="round"/><path d="M9.4 13.2 L9.6 11.3 L13.6 8.5" fill="none" stroke="#2e6bff" stroke-width="0.9" stroke-linecap="round"/></svg>
<div style="position:absolute;left:768.30px;top:982.23px;font-size:17.8px;line-height:17.8px;color:#3a66f5;white-space:nowrap;letter-spacing:-0.22px">Отправить сообщение в teleg…</div>
<div style="position:absolute;left:1068px;top:972.0px;width:112px;height:35.0px;background:#daf5e4;border-radius:11px"></div>
<svg style="position:absolute;left:1078px;top:981.0px;" width="18" height="18" viewBox="0 0 18 18"><circle cx="9" cy="9" r="9" fill="#00a369"/><path d="M5.5 9.3 L7.8 11.4 L12.4 6.7" fill="none" stroke="#fff" stroke-width="1.5" stroke-linecap="round" stroke-linejoin="round"/></svg>
<div style="position:absolute;left:1101.20px;top:982.23px;font-size:17.8px;line-height:17.8px;color:#0e9f6c;white-space:nowrap;letter-spacing:0.5px">Активно</div>
<div style="position:absolute;left:1406.30px;top:969.69px;font-size:17.5px;line-height:17.5px;color:#1d1d1f;white-space:nowrap;">08.08.2023</div>
<div style="position:absolute;left:1406.30px;top:994.69px;font-size:17.5px;line-height:17.5px;color:#80868e;white-space:nowrap;">15:36:21</div>
<div style="position:absolute;left:1763px;top:972.0px;width:35px;height:35.0px;border:1px solid #d9dfe8;border-radius:9px"></div>
<svg style="position:absolute;left:1773px;top:982.0px;" width="15" height="15" viewBox="0 0 15 15"><path d="M1 3.3 L14 3.3" stroke="#6b7480" stroke-width="1.1" stroke-linecap="round"/><path d="M5 3.2 L5 1.9 Q5 1.2 5.7 1.2 L9.3 1.2 Q10 1.2 10 1.9 L10 3.2" fill="none" stroke="#6b7480" stroke-width="1.05"/><path d="M2.6 3.6 L3.2 12.6 Q3.3 14 4.7 14 L10.3 14 Q11.7 14 11.8 12.6 L12.4 3.6" fill="none" stroke="#6b7480" stroke-width="1.15"/></svg>
<div style="position:absolute;left:35px;top:1091.0px;width:1783px;height:1.0px;background:#e9e9f0"></div>
<div style="position:absolute;left:35px;top:1024.5px;width:5px;height:66.5px;background:#8a3dbd"></div>
<div style="position:absolute;left:55.50px;top:1037.23px;font-size:17.8px;line-height:17.8px;color:#1d1d1f;white-space:nowrap;">Звук</div>
<div style="position:absolute;left:55.50px;top:1062.03px;font-size:17.8px;line-height:17.8px;color:#2e6bff;white-space:nowrap;">Кейсы: 0</div>
<div style="position:absolute;left:393px;top:1051.5px;width:12px;height:12.0px;border:2px solid #8a3dbd;border-radius:50%"></div>
<div style="position:absolute;left:415.80px;top:1049.43px;font-size:17.8px;line-height:17.8px;color:#1d1d1f;white-space:nowrap;letter-spacing:0.11px">Детекция посетителей</div>
<div style="position:absolute;left:731px;top:1039.5px;width:237.79999999999995px;height:35.0px;background:#e2eafd;border-radius:11px"></div>
<svg style="position:absolute;left:741px;top:1046.5px;" width="22" height="22" viewBox="0 0 22 22"><circle cx="11" cy="11" r="11" fill="#2e6bff"/><path d="M5.4 8.5 L9.9 8.5 L13 6.1 Q13.9 5.5 13.9 6.5 L13.9 15.5 Q13.9 16.5 13 15.9 L9.9 13.5 L5.4 13.5 Q5.1 13.5 5.1 13.1 L5.1 8.9 Q5.1 8.5 5.4 8.5 Z" fill="#fff"/><path d="M15.3 8.6 Q16.9 11 15.3 13.5" fill="none" stroke="#fff" stroke-width="1.3" stroke-linecap="round"/></svg>
<div style="position:absolute;left:768.30px;top:1049.73px;font-size:17.8px;line-height:17.8px;color:#3a66f5;white-space:nowrap;">Звуковое уведомление</div>
<div style="position:absolute;left:1068px;top:1039.5px;width:112px;height:35.0px;background:#daf5e4;border-radius:11px"></div>
<svg style="position:absolute;left:1078px;top:1048.5px;" width="18" height="18" viewBox="0 0 18 18"><circle cx="9" cy="9" r="9" fill="#00a369"/><path d="M5.5 9.3 L7.8 11.4 L12.4 6.7" fill="none" stroke="#fff" stroke-width="1.5" stroke-linecap="round" stroke-linejoin="round"/></svg>
<div style="position:absolute;left:1101.20px;top:1049.73px;font-size:17.8px;line-height:17.8px;color:#0e9f6c;white-space:nowrap;letter-spacing:0.5px">Активно</div>
<div style="position:absolute;left:1406.30px;top:1037.19px;font-size:17.5px;line-height:17.5px;color:#1d1d1f;white-space:nowrap;">08.08.2023</div>
<div style="position:absolute;left:1406.30px;top:1062.19px;font-size:17.5px;line-height:17.5px;color:#80868e;white-space:nowrap;">14:47:09</div>
<div style="position:absolute;left:1763px;top:1039.5px;width:35px;height:35.0px;border:1px solid #d9dfe8;border-radius:9px"></div>
<svg style="position:absolute;left:1773px;top:1049.5px;" width="15" height="15" viewBox="0 0 15 15"><path d="M1 3.3 L14 3.3" stroke="#6b7480" stroke-width="1.1" stroke-linecap="round"/><path d="M5 3.2 L5 1.9 Q5 1.2 5.7 1.2 L9.3 1.2 Q10 1.2 10 1.9 L10 3.2" fill="none" stroke="#6b7480" stroke-width="1.05"/><path d="M2.6 3.6 L3.2 12.6 Q3.3 14 4.7 14 L10.3 14 Q11.7 14 11.8 12.6 L12.4 3.6" fill="none" stroke="#6b7480" stroke-width="1.15"/></svg>
<div style="position:absolute;left:35px;top:1158.5px;width:1783px;height:1.0px;background:#e9e9f0"></div>
<div style="position:absolute;left:35px;top:1092.0px;width:5px;height:66.5px;background:#8a3dbd"></div>
<div style="position:absolute;left:55.50px;top:1104.73px;font-size:17.8px;line-height:17.8px;color:#1d1d1f;white-space:nowrap;">Подсчет. Открыть</div>
<div style="position:absolute;left:55.50px;top:1129.53px;font-size:17.8px;line-height:17.8px;color:#2e6bff;white-space:nowrap;">Кейсы: 0</div>
<div style="position:absolute;left:393px;top:1119.0px;width:12px;height:12.0px;border:2px solid #8a3dbd;border-radius:50%"></div>
<div style="position:absolute;left:415.80px;top:1116.93px;font-size:17.8px;line-height:17.8px;color:#1d1d1f;white-space:nowrap;">Подсчет посетителей</div>
<div style="position:absolute;left:731px;top:1107.0px;width:181.70000000000005px;height:35.0px;background:#e2eafd;border-radius:11px"></div>
<svg style="position:absolute;left:741px;top:1114.0px;" width="22" height="22" viewBox="0 0 22 22"><circle cx="11" cy="11" r="11" fill="#2e6bff"/><rect x="5.2" y="8" width="9.9" height="7" rx="1.7" fill="#fff"/><path d="M14.6 10.4 L17.9 9 L17.9 14 L14.6 12.6 Z" fill="#fff" stroke="#fff" stroke-width="0.5" stroke-linejoin="round"/></svg>
<div style="position:absolute;left:768.30px;top:1117.23px;font-size:17.8px;line-height:17.8px;color:#3a66f5;white-space:nowrap;letter-spacing:0.15px">Открыть камеру</div>
<div style="position:absolute;left:1068px;top:1107.0px;width:112px;height:35.0px;background:#daf5e4;border-radius:11px"></div>
<svg style="position:absolute;left:1078px;top:1116.0px;" width="18" height="18" viewBox="0 0 18 18"><circle cx="9" cy="9" r="9" fill="#00a369"/><path d="M5.5 9.3 L7.8 11.4 L12.4 6.7" fill="none" stroke="#fff" stroke-width="1.5" stroke-linecap="round" stroke-linejoin="round"/></svg>
<div style="position:absolute;left:1101.20px;top:1117.23px;font-size:17.8px;line-height:17.8px;color:#0e9f6c;white-space:nowrap;letter-spacing:0.5px">Активно</div>
<div style="position:absolute;left:1406.30px;top:1104.69px;font-size:17.5px;line-height:17.5px;color:#1d1d1f;white-space:nowrap;">08.08.2023</div>
<div style="position:absolute;left:1406.30px;top:1129.69px;font-size:17.5px;line-height:17.5px;color:#80868e;white-space:nowrap;">14:40:00</div>
<div style="position:absolute;left:1763px;top:1107.0px;width:35px;height:35.0px;border:1px solid #d9dfe8;border-radius:9px"></div>
<svg style="position:absolute;left:1773px;top:1117.0px;" width="15" height="15" viewBox="0 0 15 15"><path d="M1 3.3 L14 3.3" stroke="#6b7480" stroke-width="1.1" stroke-linecap="round"/><path d="M5 3.2 L5 1.9 Q5 1.2 5.7 1.2 L9.3 1.2 Q10 1.2 10 1.9 L10 3.2" fill="none" stroke="#6b7480" stroke-width="1.05"/><path d="M2.6 3.6 L3.2 12.6 Q3.3 14 4.7 14 L10.3 14 Q11.7 14 11.8 12.6 L12.4 3.6" fill="none" stroke="#6b7480" stroke-width="1.15"/></svg>
</div>
<div style="position:absolute;left:1844px;top:243px;width:8px;height:431px;background:#cdcdcd;border-radius:4px"></div>
<div style="position:absolute;left:15px;top:1107px;width:1842px;height:7px;background:linear-gradient(to bottom,rgba(0,0,0,0),rgba(0,0,0,0.032))"></div>
<div style="position:absolute;left:15px;top:1114px;width:1842px;height:52px;background:#fff;border-radius:0 0 7px 7px"></div>
<div style="position:absolute;left:1390.40px;top:1131.86px;font-size:16px;line-height:16px;color:#1d1d1f;white-space:nowrap;letter-spacing:0.25px">На странице</div>
<div style="position:absolute;left:1496px;top:1124px;width:51px;height:30px;background:#ecebf5;border-radius:8px"></div>
<div style="position:absolute;left:1503.70px;top:1132.24px;font-size:14.6px;line-height:14.6px;color:#2b2b2f;white-space:nowrap;">25</div>
<svg style="position:absolute;left:1527.5px;top:1136.5px;" width="10" height="7" viewBox="0 0 10 7"><path d="M0.8 0.8 L5 5.4 L9.2 0.8" fill="none" stroke="#6b7480" stroke-width="1.1"/></svg>
<div style="position:absolute;left:1588.40px;top:1131.05px;font-size:15.3px;line-height:15.3px;color:#1d1d1f;white-space:nowrap;">1 – 25 of 26</div>
<svg style="position:absolute;left:1720px;top:1131px;" width="9" height="15" viewBox="0 0 9 15"><path d="M8 0.8 L1 7.5 L8 14.2" fill="none" stroke="#c4c8ce" stroke-width="1.6" stroke-linecap="round" stroke-linejoin="round"/></svg>
<svg style="position:absolute;left:1729px;top:1131px;" width="9" height="15" viewBox="0 0 9 15"><path d="M8 0.8 L1 7.5 L8 14.2" fill="none" stroke="#c4c8ce" stroke-width="1.6" stroke-linecap="round" stroke-linejoin="round"/></svg>
<svg style="position:absolute;left:1757px;top:1131px;" width="9" height="15" viewBox="0 0 9 15"><path d="M8 0.8 L1 7.5 L8 14.2" fill="none" stroke="#c4c8ce" stroke-width="1.6" stroke-linecap="round" stroke-linejoin="round"/></svg>
<svg style="position:absolute;left:1791px;top:1131px;" width="9" height="15" viewBox="0 0 9 15"><path d="M1 0.8 L8 7.5 L1 14.2" fill="none" stroke="#6b7480" stroke-width="1.6" stroke-linecap="round" stroke-linejoin="round"/></svg>
<svg style="position:absolute;left:1818.4px;top:1131px;" width="9" height="15" viewBox="0 0 9 15"><path d="M1 0.8 L8 7.5 L1 14.2" fill="none" stroke="#6b7480" stroke-width="1.6" stroke-linecap="round" stroke-linejoin="round"/></svg>
<svg style="position:absolute;left:1827.2px;top:1131px;" width="9" height="15" viewBox="0 0 9 15"><path d="M1 0.8 L8 7.5 L1 14.2" fill="none" stroke="#6b7480" stroke-width="1.6" stroke-linecap="round" stroke-linejoin="round"/></svg>
<div style="position:absolute;left:0px;top:0px;width:1873px;height:1px;background:#465056"></div>
<div style="position:absolute;left:1872px;top:0px;width:1px;height:1163px;background:#58565e"></div>
</body></html>
